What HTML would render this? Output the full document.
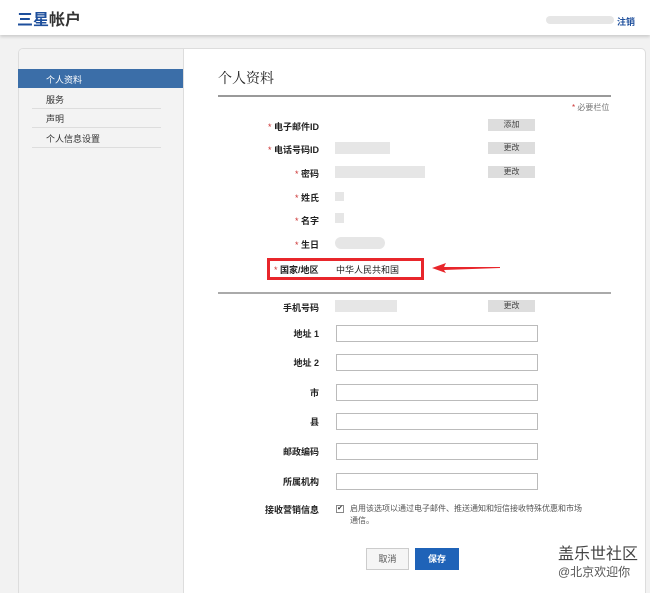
<!DOCTYPE html><html><head><meta charset="utf-8"><style>
*{margin:0;padding:0;box-sizing:border-box}
html,body{width:650px;height:593px;overflow:hidden}
body{background:#f2f2f2;font-family:"Liberation Sans","Noto Sans CJK SC",sans-serif;font-size:9px;color:#333;position:relative}
.a{position:absolute}
.hdr{left:0;top:0;width:650px;height:35px;background:#fff;box-shadow:0 2px 3px #ccc}
.panel{left:18px;top:48px;width:628px;height:560px;background:#fff;border:1px solid #ddd;border-radius:5px;overflow:hidden}
.side{left:0;top:0;width:165px;height:100%;background:#f3f3f3;border-right:1px solid #ddd}
.lbl{width:120px;text-align:right;font-weight:bold;color:#222;font-size:9px}
.lbl b{color:#c33;font-weight:normal}
.btn{width:47px;height:12px;background:#ddd;text-align:center;font-size:8px;line-height:12px;color:#444}
.inp{left:336px;width:202px;height:17px;border:1px solid #bbb;background:#fff}
.blur{background:#e6e6e6;height:12px}
</style></head><body>
<div class="a hdr"></div>
<div class="a" style="left:17px;top:6px;font-size:16px;font-weight:bold"><span style="color:#1e4f9c">三星</span>帐户</div>
<div class="a blur" style="left:546px;top:16px;width:68px;height:8px;border-radius:4px"></div>
<div class="a" style="left:617px;top:15px;font-size:9px;color:#1e4f9c;font-weight:bold">注销</div>
<div class="a panel"><div class="a side"></div></div>
<div class="a" style="left:18px;top:69px;width:165px;height:19px;background:#3b6ea8"></div>
<div class="a" style="left:46px;top:73px;color:#fff">个人资料</div>
<div class="a" style="left:46px;top:93px">服务</div>
<div class="a" style="left:32px;top:108px;width:129px;border-top:1px solid #ddd"></div>
<div class="a" style="left:46px;top:112px">声明</div>
<div class="a" style="left:32px;top:127px;width:129px;border-top:1px solid #ddd"></div>
<div class="a" style="left:46px;top:132px">个人信息设置</div>
<div class="a" style="left:32px;top:147px;width:129px;border-top:1px solid #ddd"></div>
<div class="a" style="left:218px;top:68px;font-size:14px;color:#222;font-family:'Noto Serif CJK SC',serif">个人资料</div>
<div class="a" style="left:218px;top:95px;width:393px;border-top:2px solid #999"></div>
<div class="a" style="left:572px;top:102px;color:#777;font-size:8px"><span style="color:#c33">*</span> 必要栏位</div>
<div class="a lbl" style="left:199px;top:120px"><b>*</b> 电子邮件ID</div><div class="a btn" style="left:488px;top:119px">添加</div>
<div class="a lbl" style="left:199px;top:143px"><b>*</b> 电话号码ID</div><div class="a blur" style="left:335px;top:142px;width:55px"></div><div class="a btn" style="left:488px;top:142px">更改</div>
<div class="a lbl" style="left:199px;top:167px"><b>*</b> 密码</div><div class="a blur" style="left:335px;top:166px;width:90px"></div><div class="a btn" style="left:488px;top:166px">更改</div>
<div class="a lbl" style="left:199px;top:191px"><b>*</b> 姓氏</div><div class="a blur" style="left:335px;top:192px;width:9px;height:9px"></div>
<div class="a lbl" style="left:199px;top:214px"><b>*</b> 名字</div><div class="a blur" style="left:335px;top:213px;width:9px;height:10px"></div>
<div class="a lbl" style="left:199px;top:238px"><b>*</b> 生日</div><div class="a blur" style="left:335px;top:237px;width:50px;border-radius:6px"></div>
<div class="a" style="left:267px;top:258px;width:157px;height:22px;border:3px solid #e8262b"></div>
<div class="a" style="left:274px;top:263px;font-weight:bold;color:#222"><span style="color:#c33;font-weight:normal">*</span> 国家/地区</div>
<div class="a" style="left:336px;top:263px;color:#222">中华人民共和国</div>
<svg class="a" style="left:430px;top:262px" width="72" height="12"><path d="M2 6 L16 1 L14 5 L70 5 L70 6 L14 8 L16 11 Z" fill="#e8262b"/></svg>
<div class="a" style="left:218px;top:292px;width:393px;border-top:2px solid #aaa"></div>
<div class="a lbl" style="left:199px;top:301px">手机号码</div><div class="a blur" style="left:335px;top:300px;width:62px"></div><div class="a btn" style="left:488px;top:300px">更改</div>
<div class="a lbl" style="left:199px;top:327px">地址 1</div><div class="a inp" style="top:325px"></div>
<div class="a lbl" style="left:199px;top:356px">地址 2</div><div class="a inp" style="top:354px"></div>
<div class="a lbl" style="left:199px;top:386px">市</div><div class="a inp" style="top:384px"></div>
<div class="a lbl" style="left:199px;top:415px">县</div><div class="a inp" style="top:413px"></div>
<div class="a lbl" style="left:199px;top:445px">邮政编码</div><div class="a inp" style="top:443px"></div>
<div class="a lbl" style="left:199px;top:475px">所属机构</div><div class="a inp" style="top:473px"></div>
<div class="a lbl" style="left:199px;top:503px">接收营销信息</div>
<div class="a" style="left:336px;top:505px;width:8px;height:8px;border:1px solid #888;background:#fff;font-size:7px;line-height:6px;text-align:center">✔</div>
<div class="a" style="left:350px;top:503px;width:235px;color:#555;font-size:8px;line-height:12px">启用该选项以通过电子邮件、推送通知和短信接收特殊优惠和市场通信。</div>
<div class="a" style="left:366px;top:548px;width:43px;height:22px;border:1px solid #ccc;background:#f5f5f5;color:#555;text-align:center;line-height:20px">取消</div>
<div class="a" style="left:415px;top:548px;width:44px;height:22px;background:#1f63b8;color:#fff;font-weight:bold;text-align:center;line-height:22px">保存</div>
<div class="a" style="left:558px;top:540px;font-size:16px;color:#444">盖乐世社区</div>
<div class="a" style="left:558px;top:563px;font-size:12px;color:#555">@北京欢迎你</div>
</body></html>
